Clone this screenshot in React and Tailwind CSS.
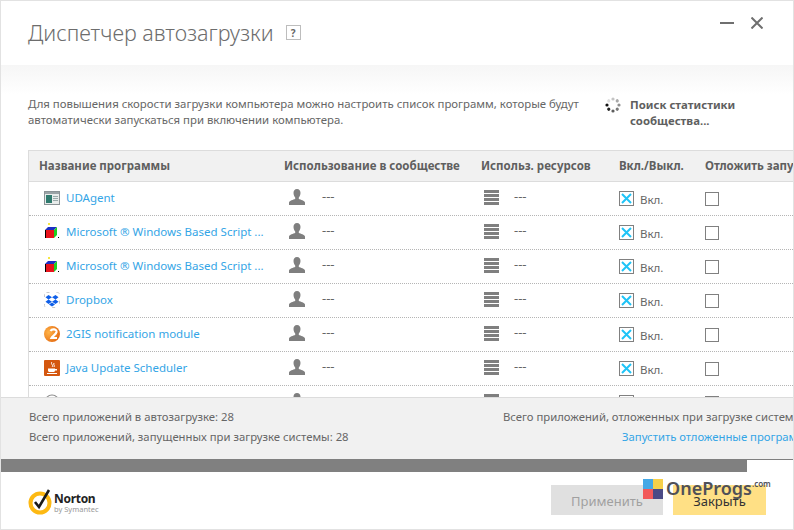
import React from "react";

const ScriptIcon = () => (
  <svg width="17" height="17" viewBox="0 0 17 17" className="shrink-0">
    <rect x="4" y="0" width="2" height="2" fill="#f5e642" />
    <rect x="2" y="7" width="8" height="8" fill="#e8141c" />
    <path d="M1 7 L4 4 H13 L10 7 Z" fill="#1b2fc4" />
    <path d="M10 7 L13 4 V12 L10 15 Z" fill="#1fd11f" />
    <path d="M1 7 H2 V15 H1 Z" fill="#000" />
    <rect x="14" y="14" width="1" height="1" fill="#000" />
  </svg>
);

const AgentIcon = () => (
  <svg width="16" height="14" viewBox="0 0 16 14" className="shrink-0">
    <rect x="0.5" y="0.5" width="15" height="13" fill="#e8eceb" stroke="#8b9396" />
    <rect x="1" y="1" width="14" height="2" fill="#9aa3a6" />
    <rect x="2" y="4" width="6" height="8" fill="#2f7a6e" />
    <rect x="9" y="5" width="5" height="1" fill="#9aa" />
    <rect x="9" y="7" width="5" height="1" fill="#9aa" />
    <rect x="9" y="9" width="5" height="1" fill="#9aa" />
  </svg>
);

const DropboxIcon = () => (
  <svg width="16" height="16" viewBox="0 0 16 16" className="shrink-0">
    <rect x="0.5" y="0.5" width="15" height="15" rx="2" fill="none" stroke="#c9c9c9" strokeDasharray="3 7" />
    <path d="M4.5 3 L8 5.2 L4.5 7.5 L1.5 5.2 Z M11.5 3 L14.5 5.2 L11.5 7.5 L8 5.2 Z M4.5 7.5 L8 9.8 L4.5 12 L1.5 9.8 Z M11.5 7.5 L14.5 9.8 L11.5 12 L8 9.8 Z M8 10.5 L11 12.5 L8 14.5 L5 12.5 Z" fill="#0f5fe8" />
  </svg>
);

const GisIcon = () => (
  <svg width="16" height="16" viewBox="0 0 16 16" className="shrink-0">
    <defs>
      <radialGradient id="gis" cx="0.3" cy="0.4" r="0.8">
        <stop offset="0" stopColor="#ffb347" />
        <stop offset="1" stopColor="#e2640c" />
      </radialGradient>
    </defs>
    <circle cx="8" cy="8" r="8" fill="url(#gis)" />
    <path d="M6.5 5 C8 2.5 13 3 12.5 6 C12 8.5 8.5 10 7.5 12 H13" fill="none" stroke="#fff" strokeWidth="2.2" />
  </svg>
);

const JavaIcon = () => (
  <svg width="16" height="16" viewBox="0 0 16 16" className="shrink-0">
    <rect width="16" height="16" rx="1" fill="#d4570f" />
    <path d="M8 2 C6 4 10 5 8 7 M10 3 C9 5 11 5 10 7" fill="none" stroke="#fff" strokeWidth="1" />
    <path d="M4 8.5 H11 V10.5 C11 11.5 10 12 9 12 H6 C5 12 4 11.5 4 10.5 Z M11 9 H13 V10.5 H11 M3 13 H13 V14 H3 Z" fill="#fff" />
  </svg>
);

const RoundIcon = () => (
  <svg width="16" height="16" viewBox="0 0 16 16" className="shrink-0">
    <circle cx="8" cy="8" r="7" fill="none" stroke="#888" strokeWidth="1.2" />
  </svg>
);

const PersonIcon = () => (
  <svg width="16" height="16" viewBox="0 0 16 16" className="shrink-0">
    <path d="M8 0 C10.3 0 11.6 1.8 11.5 4 C11.4 6 10.6 7.6 9.8 8.6 V10 C11.8 10.8 15.4 11.4 16 13.4 V16 H0 V13.4 C0.6 11.4 4.2 10.8 6.2 10 V8.6 C5.4 7.6 4.6 6 4.5 4 C4.4 1.8 5.7 0 8 0 Z" fill="#7f7f7f" />
  </svg>
);

const BarsIcon = () => (
  <div className="flex flex-col gap-px w-[15px] shrink-0">
    <div className="h-[3px] bg-[#7f7f7f]" />
    <div className="h-[3px] bg-[#7f7f7f]" />
    <div className="h-[3px] bg-[#7f7f7f]" />
    <div className="h-[3px] bg-[#7f7f7f]" />
  </div>
);

const Spinner = () => {
  const dots = [
    ["#c4c4c4", 0],
    ["#a8a8a8", 45],
    ["#8f8f8f", 90],
    ["#7a7a7a", 135],
    ["#5c5c5c", 180],
    ["#222222", 225],
    ["#111111", 270],
    ["#dddddd", 315],
  ];
  return (
    <svg width="16" height="16" viewBox="-8 -8 16 16" className="shrink-0">
      {dots.map(([color, angle]) => (
        <circle key={angle} cx="0" cy="-6" r="1.6" fill={color} transform={`rotate(${angle})`} />
      ))}
    </svg>
  );
};

const rows = [
  { name: "UDAgent", icon: <AgentIcon /> },
  { name: "Microsoft ® Windows Based Script ...", icon: <ScriptIcon /> },
  { name: "Microsoft ® Windows Based Script ...", icon: <ScriptIcon /> },
  { name: "Dropbox", icon: <DropboxIcon /> },
  { name: "2GIS notification module", icon: <GisIcon /> },
  { name: "Java Update Scheduler", icon: <JavaIcon /> },
  { name: "", icon: <RoundIcon /> },
];

const cols = "grid grid-cols-[255px_197px_138px_86px_200px]";

const Row = ({ row }) => (
  <div className={`${cols} h-[34px] shrink-0 items-center border-b border-dotted border-[#b5b5b5] text-[11.5px]`}>
    <div className="flex items-center gap-[6px] pl-[15px] min-w-0 pb-[2px]">
      <div className="w-[16px] flex justify-center">{row.icon}</div>
      <span className="text-[#34a5e6] whitespace-nowrap">{row.name}</span>
    </div>
    <div className="flex items-center pl-[5px] gap-[17px] pb-[3px]">
      <PersonIcon />
      <span className="text-[13px] text-[#666]">---</span>
    </div>
    <div className="flex items-center pl-[3px] gap-[15px] pb-[3px]">
      <BarsIcon />
      <span className="text-[13px] text-[#666]">---</span>
    </div>
    <div className="flex items-center gap-[6px]">
      <div className="w-[15px] h-[15px] border border-[#808080] flex items-center justify-center">
        <svg width="11" height="11" viewBox="0 0 11 11">
          <path d="M1 1 L10 10 M10 1 L1 10" stroke="#1fc4f7" strokeWidth="2" />
        </svg>
      </div>
      <span className="text-[#666] pt-[2px]">Вкл.</span>
    </div>
    <div className="pt-[1px]">
      <div className="w-[14px] h-[14px] border border-[#808080]" />
    </div>
  </div>
);

export default function App() {
  return (
    <div
      className="relative flex flex-col w-[794px] h-[530px] overflow-hidden bg-white border border-[#e2e2e2] text-[#666]"
      style={{ fontFamily: '"Noto Sans", "Open Sans", sans-serif' }}
    >
      <header className="flex h-[64px] shrink-0 items-start pl-[27px] pr-[30px]">
        <h1 className="mt-[15px] text-[21.5px] leading-[34px] font-light text-[#6d6d6d]">Диспетчер автозагрузки</h1>
        <div className="ml-[12px] mt-[24px] w-[15px] h-[15px] border border-[#bdbdbd] flex items-center justify-center text-[10px] font-bold leading-none text-[#666]">
          ?
        </div>
        <div className="ml-auto flex items-start gap-[17px] mt-[16px]">
          <div className="mt-[5px] w-[14px] h-[2px] bg-[#6f6f6f]" />
          <svg width="12" height="12" viewBox="0 0 12 12">
            <path d="M0.5 0.5 L11.5 11.5 M11.5 0.5 L0.5 11.5" stroke="#6f6f6f" strokeWidth="2" />
          </svg>
        </div>
      </header>

      <section className="flex h-[85px] shrink-0 bg-gradient-to-b from-[#f6f6f6] to-white to-[35%] pl-[27px] pt-[31px] text-[11.4px] leading-[16px]">
        <p className="w-[577px] shrink-0 text-[#666]">
          Для повышения скорости загрузки компьютера можно настроить список программ, которые будут
          <br />
          автоматически запускаться при включении компьютера.
        </p>
        <div className="flex gap-[9px] items-start">
          <div className="pt-[1px]">
            <Spinner />
          </div>
          <p className="pt-[1px] font-bold text-[#5f5f5f]">
            Поиск статистики
            <br />
            сообщества...
          </p>
        </div>
      </section>

      <section className="flex-1 min-h-0 overflow-hidden ml-[27px] border-l border-[#dcdcdc]">
        <div className={`${cols} h-[32px] items-center pb-[1px] bg-[#f1f1f1] border-y border-[#dcdcdc] text-[11.5px] font-bold text-[#5f5f5f] whitespace-nowrap`}>
          <div className="pl-[10px]">Название программы</div>
          <div>Использование в сообществе</div>
          <div>Использ. ресурсов</div>
          <div>Вкл./Выкл.</div>
          <div>Отложить запуск</div>
        </div>
        {rows.map((row, i) => (
          <Row key={i} row={row} />
        ))}
      </section>

      <section className="flex h-[62px] shrink-0 bg-[#f1f1f1] border-t border-[#dcdcdc] pl-[28px] text-[11.3px] text-[#666] whitespace-nowrap">
        <div className="w-[474px] shrink-0 pt-[11px] flex flex-col gap-[4px] leading-[16px]">
          <span>Всего приложений в автозагрузке: 28</span>
          <span>Всего приложений, запущенных при загрузке системы: 28</span>
        </div>
        <div className="pt-[11px] flex flex-col gap-[4px] leading-[16px]">
          <span>Всего приложений, отложенных при загрузке системы: 0</span>
          <span className="pl-[119px] text-[#34a5e6]">Запустить отложенные программы</span>
        </div>
      </section>

      <div className="h-[13px] shrink-0 bg-[#808080] flex justify-end items-end">
        <div className="h-[12px] w-[46px] bg-white" />
      </div>

      <footer className="flex h-[57px] shrink-0 items-start pl-[27px]">
        <div className="flex items-start mt-[17px]">
          <svg width="26" height="28" viewBox="0 0 26 28" className="shrink-0 -mt-[2px]">
            <circle cx="12" cy="16" r="9.5" fill="none" stroke="#fdb913" strokeWidth="4" />
            <path d="M7 15 L11 20 L21 3" fill="none" stroke="#1a1a1a" strokeWidth="2.6" />
          </svg>
          <div className="flex flex-col pt-[4px]">
            <span className="text-[12px] leading-[12px] font-bold tracking-[-0.3px] text-[#222]">Norton</span>
            <span className="text-[7.5px] leading-[9px] text-[#999]">by Symantec</span>
          </div>
        </div>
        <div className="ml-auto mt-[13px] mr-[27px] flex gap-[10px]">
          <button className="w-[112px] h-[30px] pt-[3px] bg-[#e0e0e0] text-[#a0a0a0] text-[13px]">Применить</button>
          <button className="w-[93px] h-[30px] pt-[3px] bg-[#ffe085] text-[#333] text-[13px]">Закрыть</button>
        </div>
      </footer>

      {/* watermark sitting over the buttons */}
      <div className="absolute left-[642px] top-[478px] flex items-start">
        <div className="grid grid-cols-2 w-[20px] h-[20px]">
          <div className="bg-[#45a8e6]" />
          <div className="bg-[#f7d04a]" />
          <div className="bg-[#f2595a]" />
          <div className="bg-[#4b4a86]" />
        </div>
        <span className="ml-[3px] -mt-[1px] text-[18px] leading-[20px] font-semibold text-[#4f5058]">OneProgs</span>
        <span className="text-[8px] leading-[10px] font-semibold text-[#4f5058]">.com</span>
      </div>
    </div>
  );
}
